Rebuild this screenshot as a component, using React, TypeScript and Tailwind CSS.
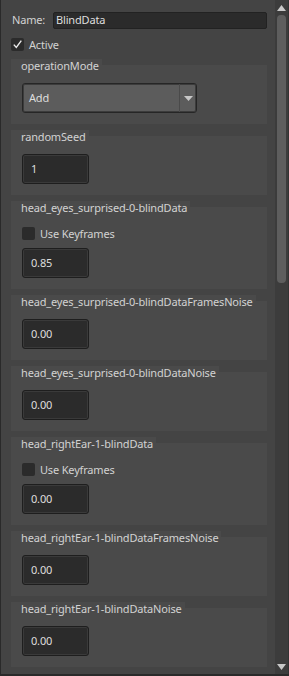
import React from "react";

const font = { fontFamily: '"Noto Sans", "DejaVu Sans", sans-serif' };

function Label({ text }: { text: string }) {
  return (
    <div className="-mt-[6px] h-[14px] w-fit bg-[#4a4a4a] pl-[10px] pr-[3px] text-[11px] leading-[14px] tracking-[-0.17px] text-[#d2d2d2]">
      {text}
    </div>
  );
}

function NumBox({ value }: { value: string }) {
  return (
    <div className="ml-[11px] flex h-[30px] w-[67px] items-center rounded-[3px] border border-[#1e1e1e] bg-[#2b2b2b] pl-[8px] text-[11px] tracking-[-0.17px] text-[#dedede] shadow-[inset_0_0_0_1px_#3a3a3a]">
      {value}
    </div>
  );
}

function KeyCheck() {
  return (
    <div className="ml-[11px] mt-[12px] flex h-[13px] items-center">
      <div className="h-[13px] w-[13px] rounded-[2px] bg-[#2b2b2b]" />
      <span className="ml-[5px] text-[11px] leading-[13px] tracking-[-0.17px] text-[#d2d2d2]">Use Keyframes</span>
    </div>
  );
}

function Group({ label, value, keyframes }: { label: string; value: string; keyframes?: boolean }) {
  return (
    <div className="mt-[12px] flex flex-col bg-[#4a4a4a] pb-[11px]">
      <Label text={label} />
      {keyframes ? (
        <>
          <KeyCheck />
          <div className="mt-[8px]">
            <NumBox value={value} />
          </div>
        </>
      ) : (
        <div className="mt-[10px]">
          <NumBox value={value} />
        </div>
      )}
    </div>
  );
}

export default function App() {
  return (
    <div
      style={font}
      className="flex h-[676px] w-[289px] overflow-hidden border-b-[2px] border-l border-[#2a2a2a] bg-[#444444]"
    >
      <div className="flex w-[274px] flex-col pl-[10px] pr-[8px]">
        {/* Name row */}
        <div className="mt-[12px] flex h-[17px] items-center">
          <span className="ml-[1px] w-[41px] text-[11px] tracking-[-0.17px] text-[#d2d2d2]">Name:</span>
          <div className="flex h-[17px] flex-1 items-center rounded-[2px] border border-[#222] bg-[#2b2b2b] pl-[2px] text-[11px] tracking-[-0.17px] text-[#dedede]">
            BlindData
          </div>
        </div>
        {/* Active */}
        <div className="mt-[9px] flex h-[13px] items-center">
          <div className="flex h-[13px] w-[13px] items-center justify-center rounded-[2px] bg-[#2b2b2b]">
            <svg width="11" height="11" viewBox="0 0 11 11">
              <path d="M1.8 5.6 L4.3 8.4 L9.3 1.6" stroke="#ececec" strokeWidth="1.4" fill="none" />
            </svg>
          </div>
          <span className="ml-[5px] text-[11px] leading-[13px] tracking-[-0.17px] text-[#d2d2d2]">Active</span>
        </div>
        {/* operationMode */}
        <div className="mt-[14px] flex flex-col bg-[#4a4a4a] pb-[11px]">
          <Label text="operationMode" />
          <div className="ml-[11px] mt-[10px] flex h-[30px] w-[175px] rounded-[3px] border border-[#262626] bg-[#5c5c5c] shadow-[inset_0_0_0_1px_#3c3c3c]">
            <div className="flex flex-1 items-center pl-[6px] text-[11px] tracking-[-0.17px] text-[#dedede]">Add</div>
            <div className="flex w-[17px] items-center justify-center border-l border-[#4a4a4a]">
              <svg width="9" height="5" viewBox="0 0 9 5">
                <path d="M0 0 L9 0 L4.5 5 Z" fill="#c8c8c8" />
              </svg>
            </div>
          </div>
        </div>
        <Group label="randomSeed" value="1" />
        <Group label="head_eyes_surprised-0-blindData" value="0.85" keyframes />
        <Group label="head_eyes_surprised-0-blindDataFramesNoise" value="0.00" />
        <Group label="head_eyes_surprised-0-blindDataNoise" value="0.00" />
        <Group label="head_rightEar-1-blindData" value="0.00" keyframes />
        <Group label="head_rightEar-1-blindDataFramesNoise" value="0.00" />
        <Group label="head_rightEar-1-blindDataNoise" value="0.00" />
      </div>
      {/* scrollbar */}
      <div className="flex w-[14px] flex-col items-center border-r border-[#333] bg-[#3c3c3c]">
        <svg className="mt-[5px]" width="9" height="6" viewBox="0 0 9 6">
          <path d="M0 6 L9 6 L4.5 0 Z" fill="#c8c8c8" />
        </svg>
        <div className="mt-[4px] h-[268px] w-[9px] rounded-[4px] bg-[#5e5e5e]" />
        <div className="flex-1" />
        <svg className="mb-[4px]" width="9" height="6" viewBox="0 0 9 6">
          <path d="M0 0 L9 0 L4.5 6 Z" fill="#c8c8c8" />
        </svg>
      </div>
    </div>
  );
}
